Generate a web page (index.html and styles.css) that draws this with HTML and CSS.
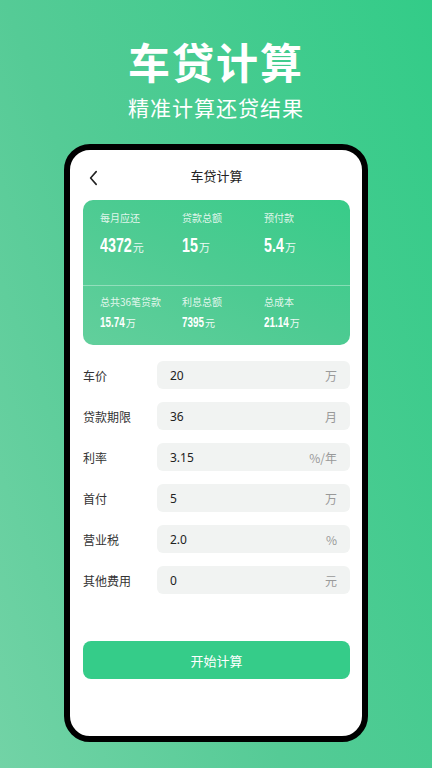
FILE: index.html
```html
<!DOCTYPE html>
<html lang="zh-CN">
<head>
  <meta charset="UTF-8">
  <meta name="viewport" content="width=device-width, initial-scale=1.0">
  <title>车贷计算</title>
  <link rel="stylesheet" href="styles.css">
</head>
<body>

  <div class="hero">
    <h1>车贷计算</h1>
    <p class="slogan">精准计算还贷结果</p>
  </div>

  <div class="phone">
    <div class="screen">
      <div class="topbar">
        <svg class="back" viewBox="0 0 12 20" width="10" height="16">
          <path d="M10 2 L3 10 L10 18" fill="none" stroke="#222" stroke-width="2" stroke-linecap="round" stroke-linejoin="round"/>
        </svg>
        <span class="topbar-title">车贷计算</span>
      </div>

      <div class="result">
        <div class="result-row big">
          <div class="cell"><span class="lbl">每月应还</span><span class="num"><b class="n">4372</b><small>元</small></span></div>
          <div class="cell"><span class="lbl">贷款总额</span><span class="num"><b class="n">15</b><small>万</small></span></div>
          <div class="cell"><span class="lbl">预付款</span><span class="num"><b class="n">5.4</b><small>万</small></span></div>
        </div>
        <div class="result-row small">
          <div class="cell"><span class="lbl">总共36笔贷款</span><span class="num"><b class="n">15.74</b><small>万</small></span></div>
          <div class="cell"><span class="lbl">利息总额</span><span class="num"><b class="n">7395</b><small>元</small></span></div>
          <div class="cell"><span class="lbl">总成本</span><span class="num"><b class="n">21.14</b><small>万</small></span></div>
        </div>
      </div>

      <div class="form">
        <div class="field"><label>车价</label><div class="box"><span>20</span><em>万</em></div></div>
        <div class="field"><label>贷款期限</label><div class="box"><span>36</span><em>月</em></div></div>
        <div class="field"><label>利率</label><div class="box"><span>3.15</span><em>%/年</em></div></div>
        <div class="field"><label>首付</label><div class="box"><span>5</span><em>万</em></div></div>
        <div class="field"><label>营业税</label><div class="box"><span>2.0</span><em>%</em></div></div>
        <div class="field"><label>其他费用</label><div class="box"><span>0</span><em>元</em></div></div>
      </div>

      <button class="calc">开始计算</button>
    </div>
  </div>

  <script>
    // 数字用的是窄体效果，缩放后把多出来的宽度收回去
    document.querySelectorAll('.n').forEach(function (el) {
      var w = el.offsetWidth;
      el.style.marginRight = (-(1 - 0.68) * w) + 'px';
    });
  </script>

</body>
</html>
```

FILE: styles.css
```css
body {
  margin: 0;
  width: 432px;
  height: 768px;
  overflow: hidden;
  background: linear-gradient(70deg, #72d3a6 0%, #55cb96 40%, #33cc88 100%);
  font-family: "Noto Sans CJK SC", "Noto Sans", sans-serif;
  color: #222;
}

.hero {
  text-align: center;
  color: #fff;
  padding-top: 30px;
}

.hero h1 {
  margin: 0;
  font-size: 42px;
  line-height: 62px;
  font-weight: 700;
  letter-spacing: 2px;
}

.slogan {
  margin: 1px 0 0;
  font-size: 21px;
  line-height: 28px;
  letter-spacing: 1px;
}

.phone {
  margin: 23px auto 0;
  width: 292px;
  height: 586px;
  border: 6px solid #000;
  border-radius: 26px;
  background: #fff;
  overflow: hidden;
}

.screen {
  padding: 0 12px 0 13px;
}

.topbar {
  position: relative;
  height: 50px;
  display: flex;
  align-items: center;
  justify-content: center;
}

.back {
  position: absolute;
  left: 5px;
  top: 20px;
}

.topbar-title {
  font-size: 13px;
  color: #222;
}

.result {
  border-radius: 10px;
  background: linear-gradient(30deg, #62cf9c 0%, #4dcb92 50%, #38cc89 100%);
  color: #fff;
}

.result-row {
  display: flex;
  padding-left: 17px;
}

.result-row.big {
  height: 86px;
  border-bottom: 1px solid rgba(255, 255, 255, 0.35);
  box-sizing: border-box;
  padding-top: 10px;
}

.result-row.small {
  height: 59px;
  padding-top: 8px;
  box-sizing: border-box;
}

.cell {
  width: 82px;
  display: flex;
  flex-direction: column;
}

.lbl {
  font-size: 10px;
  line-height: 16px;
  color: rgba(255, 255, 255, 0.85);
}

.num {
  display: flex;
  align-items: baseline;
}

.n {
  display: inline-block;
  font-family: "Liberation Sans", sans-serif;
  font-weight: 700;
  transform: scaleX(0.68);
  transform-origin: left center;
}

.big .num {
  font-size: 21px;
  line-height: 30px;
  margin-top: 4px;
}

.small .num {
  font-size: 14.5px;
  line-height: 20px;
  margin-top: 2px;
}

.num small {
  font-family: "Noto Sans CJK SC", sans-serif;
  font-weight: 400;
  font-size: 11px;
  margin-left: 1px;
  opacity: 0.9;
}

.small .num small {
  font-size: 10px;
}

.form {
  margin-top: 16px;
  display: flex;
  flex-direction: column;
  gap: 13px;
}

.field {
  display: flex;
  align-items: center;
}

.field label {
  width: 74px;
  font-size: 12px;
  color: #333;
}

.box {
  flex: 1;
  height: 28px;
  border-radius: 6px;
  background: #f1f3f2;
  display: flex;
  align-items: center;
  justify-content: space-between;
  padding: 0 13px;
  font-size: 12px;
}

.box span {
  font-family: "Noto Sans", sans-serif;
  color: #222;
}

.box em {
  font-style: normal;
  color: #999;
  font-size: 12px;
}

.calc {
  display: block;
  width: 100%;
  margin-top: 47px;
  height: 38px;
  border: none;
  border-radius: 8px;
  background: #35cc89;
  color: #fff;
  font-family: "Noto Sans CJK SC", sans-serif;
  font-size: 13px;
}
```
